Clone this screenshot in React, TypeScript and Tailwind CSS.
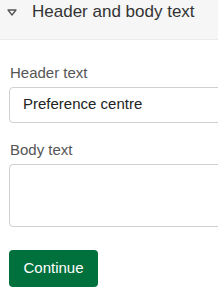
export default function App() {
  return (
    <div className="w-[218px] h-[303px] overflow-hidden bg-white font-['Liberation_Sans',Arial,sans-serif]">
      <div className="h-[40px] bg-[#f6f6f6] border-b border-[#ebebeb] flex items-start">
        <svg width="10" height="7" viewBox="0 0 10 7" className="ml-[7px] mt-[9px] shrink-0">
          <path d="M1 1 L9 1 L5 6 Z" fill="none" stroke="#555" strokeWidth="1.3" strokeLinejoin="round" />
        </svg>
        <span className="ml-[15px] text-[17px] leading-[24px] text-[#333] whitespace-nowrap">
          Header and body text
        </span>
      </div>
      <div className="w-[300px] pl-[9px] pt-[23px]">
        <label className="block pl-px text-[15px] leading-[20px] text-[#555]">Header text</label>
        <div className="mt-[4px] h-[36px] border border-[#d0d0d0] rounded-[4px] flex items-center pl-[13px] pb-px text-[15px] text-[#222]">
          Preference centre
        </div>
        <label className="block mt-[17px] pl-px text-[15px] leading-[20px] text-[#555]">Body text</label>
        <div className="mt-[4px] h-[63px] border border-[#d0d0d0] rounded-[4px]" />
        <button className="mt-[23px] w-[89px] h-[37px] rounded-[4px] bg-[#00703c] text-white text-[15px] flex items-center justify-center">
          Continue
        </button>
      </div>
    </div>
  );
}
